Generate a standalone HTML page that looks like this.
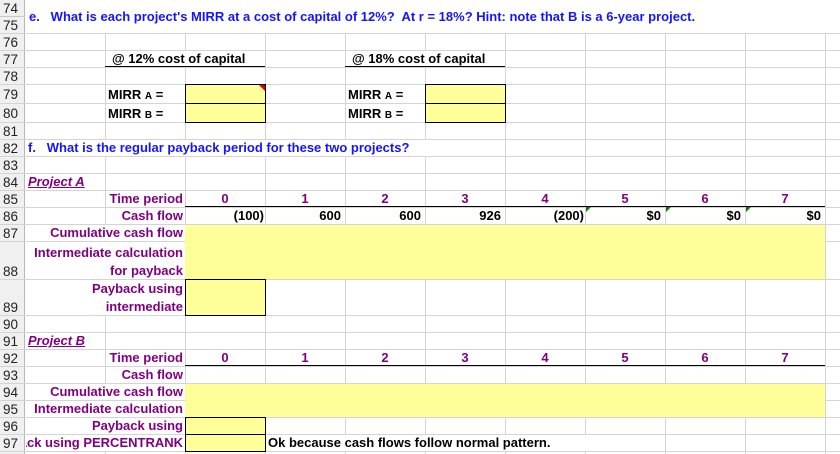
<!DOCTYPE html>
<html><head><meta charset="utf-8"><style>
body{margin:0;width:840px;height:454px;overflow:hidden;background:#fff;position:relative;font-family:"Liberation Sans",Arial,sans-serif}
div{position:absolute;box-sizing:border-box}
.v{width:1px;background:#d4d4d4}
.h{height:1px;background:#d4d4d4}
.w{background:#fff}
.y{background:#ffff99}
.t{font-weight:bold;font-size:13px;white-space:nowrap;line-height:15px}
.b{color:#1414ff}.p{color:#800080}.k{color:#000}
.r{text-align:right}.c{text-align:center}
.n{font-size:13.5px;color:#222;left:3px;line-height:15px}
.bx{border:1px solid #000}
</style></head><body>
<div style="left:0;top:0;width:25px;height:454px;background:#f0f0f0;border-right:1px solid #b8b8b8"></div>
<div class="v" style="left:105px;top:0;height:454px"></div>
<div class="v" style="left:185px;top:0;height:454px"></div>
<div class="v" style="left:265px;top:0;height:454px"></div>
<div class="v" style="left:345px;top:0;height:454px"></div>
<div class="v" style="left:425px;top:0;height:454px"></div>
<div class="v" style="left:505px;top:0;height:454px"></div>
<div class="v" style="left:585px;top:0;height:454px"></div>
<div class="v" style="left:665px;top:0;height:454px"></div>
<div class="v" style="left:745px;top:0;height:454px"></div>
<div class="v" style="left:825px;top:0;height:454px"></div>
<div class="h" style="left:0;width:25px;top:16px;background:#c8c8c8"></div>
<div class="h" style="left:0;width:840px;top:33px"></div>
<div class="h" style="left:0;width:840px;top:50px"></div>
<div class="h" style="left:0;width:840px;top:67px"></div>
<div class="h" style="left:0;width:840px;top:84px"></div>
<div class="h" style="left:0;width:840px;top:103px"></div>
<div class="h" style="left:0;width:840px;top:122px"></div>
<div class="h" style="left:0;width:840px;top:139px"></div>
<div class="h" style="left:0;width:840px;top:156px"></div>
<div class="h" style="left:0;width:840px;top:173px"></div>
<div class="h" style="left:0;width:840px;top:190px"></div>
<div class="h" style="left:0;width:840px;top:207px"></div>
<div class="h" style="left:0;width:840px;top:224px"></div>
<div class="h" style="left:0;width:840px;top:241px"></div>
<div class="h" style="left:0;width:840px;top:279px"></div>
<div class="h" style="left:0;width:840px;top:315px"></div>
<div class="h" style="left:0;width:840px;top:332px"></div>
<div class="h" style="left:0;width:840px;top:349px"></div>
<div class="h" style="left:0;width:840px;top:366px"></div>
<div class="h" style="left:0;width:840px;top:383px"></div>
<div class="h" style="left:0;width:840px;top:400px"></div>
<div class="h" style="left:0;width:840px;top:417px"></div>
<div class="h" style="left:0;width:840px;top:434px"></div>
<div class="h" style="left:0;width:840px;top:451px"></div>
<div class="w" style="left:26px;top:0;width:814px;height:33px"></div>
<div class="w" style="left:106px;top:51px;width:159px;height:16px"></div>
<div class="w" style="left:346px;top:51px;width:159px;height:16px"></div>
<div class="w" style="left:26px;top:140px;width:420px;height:16px"></div>
<div class="w" style="left:26px;top:225px;width:159px;height:16px"></div>
<div class="w" style="left:26px;top:242px;width:159px;height:37px"></div>
<div class="w" style="left:26px;top:280px;width:159px;height:35px"></div>
<div class="w" style="left:26px;top:384px;width:159px;height:16px"></div>
<div class="w" style="left:26px;top:401px;width:159px;height:16px"></div>
<div class="w" style="left:26px;top:418px;width:159px;height:16px"></div>
<div class="w" style="left:26px;top:435px;width:159px;height:16px"></div>
<div class="w" style="left:266px;top:435px;width:330px;height:16px"></div>
<div class="y" style="left:185px;top:225px;width:640px;height:54px"></div>
<div class="y" style="left:185px;top:384px;width:640px;height:33px"></div>
<div class="y bx" style="left:185px;top:84px;width:81px;height:20px"></div>
<div class="y bx" style="left:185px;top:103px;width:81px;height:20px"></div>
<div class="y bx" style="left:425px;top:84px;width:81px;height:20px"></div>
<div class="y bx" style="left:425px;top:103px;width:81px;height:20px"></div>
<div class="y bx" style="left:185px;top:279px;width:81px;height:37px"></div>
<div class="y bx" style="left:185px;top:417px;width:81px;height:18px"></div>
<div class="y bx" style="left:185px;top:434px;width:81px;height:18px"></div>
<div style="left:259px;top:85px;width:0;height:0;border-top:6px solid #e00000;border-left:6px solid transparent"></div>
<div style="left:105px;top:66px;width:160px;height:1px;background:#000"></div>
<div style="left:345px;top:66px;width:160px;height:1px;background:#000"></div>
<div style="left:185px;top:206px;width:640px;height:1px;background:#000"></div>
<div style="left:185px;top:365px;width:640px;height:1px;background:#000"></div>
<div style="left:586px;top:207px;border-top:5px solid #008000;border-right:5px solid transparent"></div>
<div style="left:666px;top:207px;border-top:5px solid #008000;border-right:5px solid transparent"></div>
<div style="left:746px;top:207px;border-top:5px solid #008000;border-right:5px solid transparent"></div>
<div class="n" style="top:1px">74</div>
<div class="n" style="top:18px">75</div>
<div class="n" style="top:35px">76</div>
<div class="n" style="top:52px">77</div>
<div class="n" style="top:69px">78</div>
<div class="n" style="top:87px">79</div>
<div class="n" style="top:106px">80</div>
<div class="n" style="top:124px">81</div>
<div class="n" style="top:141px">82</div>
<div class="n" style="top:158px">83</div>
<div class="n" style="top:175px">84</div>
<div class="n" style="top:192px">85</div>
<div class="n" style="top:209px">86</div>
<div class="n" style="top:226px">87</div>
<div class="n" style="top:264px">88</div>
<div class="n" style="top:300px">89</div>
<div class="n" style="top:317px">90</div>
<div class="n" style="top:334px">91</div>
<div class="n" style="top:351px">92</div>
<div class="n" style="top:368px">93</div>
<div class="n" style="top:385px">94</div>
<div class="n" style="top:402px">95</div>
<div class="n" style="top:419px">96</div>
<div class="n" style="top:436px">97</div>
<div class="t b" style="left:29px;top:9px">e.&nbsp;&nbsp; What is each project's MIRR at a cost of capital of 12%?&nbsp; At r = 18%? Hint: note that B is a 6-year project.</div>
<div class="t k" style="left:112px;top:51px">@ 12% cost of capital</div>
<div class="t k" style="left:352px;top:51px">@ 18% cost of capital</div>
<div class="t k" style="left:108px;top:87px">MIRR <span style="font-size:10px">A</span> =</div>
<div class="t k" style="left:108px;top:106px">MIRR <span style="font-size:10px">B</span> =</div>
<div class="t k" style="left:348px;top:87px">MIRR <span style="font-size:10px">A</span> =</div>
<div class="t k" style="left:348px;top:106px">MIRR <span style="font-size:10px">B</span> =</div>
<div class="t b" style="left:28px;top:140px">f.&nbsp;&nbsp; What is the regular payback period for these two projects?</div>
<div class="t p" style="left:28px;top:174px;font-style:italic;text-decoration:underline">Project A</div>
<div class="t p r" style="left:20px;width:163px;top:191px">Time period</div>
<div class="t p r" style="left:20px;width:163px;top:208px">Cash flow</div>
<div class="t p r" style="left:20px;width:163px;top:225px">Cumulative cash flow</div>
<div class="t p r" style="left:20px;width:163px;top:245px">Intermediate calculation</div>
<div class="t p r" style="left:20px;width:163px;top:263px">for payback</div>
<div class="t p r" style="left:20px;width:163px;top:281px">Payback using</div>
<div class="t p r" style="left:20px;width:163px;top:299px">intermediate</div>
<div class="t p" style="left:28px;top:333px;font-style:italic;text-decoration:underline">Project B</div>
<div class="t p r" style="left:20px;width:163px;top:350px">Time period</div>
<div class="t p r" style="left:20px;width:163px;top:367px">Cash flow</div>
<div class="t p r" style="left:20px;width:163px;top:384px">Cumulative cash flow</div>
<div class="t p r" style="left:20px;width:163px;top:401px">Intermediate calculation</div>
<div class="t p r" style="left:20px;width:163px;top:418px">Payback using</div>
<div class="t p" style="left:26px;top:435px;width:157px;overflow:hidden;direction:rtl;text-align:right"><span style="direction:ltr;unicode-bidi:embed">Payback using PERCENTRANK</span></div>
<div class="t k" style="left:268px;top:435px">Ok because cash flows follow normal pattern.</div>
<div class="t p c" style="left:185px;width:80px;top:191px">0</div>
<div class="t p c" style="left:265px;width:80px;top:191px">1</div>
<div class="t p c" style="left:345px;width:80px;top:191px">2</div>
<div class="t p c" style="left:425px;width:80px;top:191px">3</div>
<div class="t p c" style="left:505px;width:80px;top:191px">4</div>
<div class="t p c" style="left:585px;width:80px;top:191px">5</div>
<div class="t p c" style="left:665px;width:80px;top:191px">6</div>
<div class="t p c" style="left:745px;width:80px;top:191px">7</div>
<div class="t p c" style="left:185px;width:80px;top:350px">0</div>
<div class="t p c" style="left:265px;width:80px;top:350px">1</div>
<div class="t p c" style="left:345px;width:80px;top:350px">2</div>
<div class="t p c" style="left:425px;width:80px;top:350px">3</div>
<div class="t p c" style="left:505px;width:80px;top:350px">4</div>
<div class="t p c" style="left:585px;width:80px;top:350px">5</div>
<div class="t p c" style="left:665px;width:80px;top:350px">6</div>
<div class="t p c" style="left:745px;width:80px;top:350px">7</div>
<div class="t k r" style="left:185px;width:79px;top:208px">(100)</div>
<div class="t k r" style="left:265px;width:76px;top:208px">600</div>
<div class="t k r" style="left:345px;width:76px;top:208px">600</div>
<div class="t k r" style="left:425px;width:76px;top:208px">926</div>
<div class="t k r" style="left:505px;width:79px;top:208px">(200)</div>
<div class="t k r" style="left:585px;width:76px;top:208px">$0</div>
<div class="t k r" style="left:665px;width:76px;top:208px">$0</div>
<div class="t k r" style="left:745px;width:76px;top:208px">$0</div>
</body></html>
